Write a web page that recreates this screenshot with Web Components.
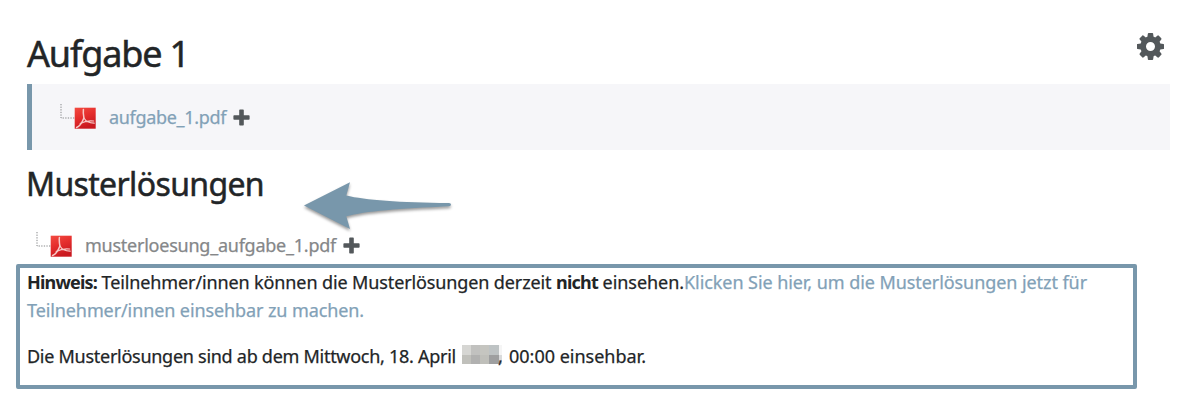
<!DOCTYPE html>
<html lang="de">
<head>
<meta charset="utf-8">
<title>Aufgabe 1</title>
<style>
  body {
    margin: 0;
    background: #fff;
    color: #222527;
    font-family: "Noto Sans", "Open Sans", sans-serif;
    font-size: 18px;
    line-height: 28px;
    -webkit-text-stroke: .25px;
    --accent: #7897ab;
    --link: #82a1b7;
    --icon: #53585b;
  }
</style>
</head>
<body>
<task-page></task-page>

<script>
// One run of text, tracked so that it fills the given width
class FitText extends HTMLElement {
  constructor() {
    super();
    this.attachShadow({ mode: "open" });
    this.shadowRoot.innerHTML = `
      <style>
        :host { display: block; flex: none; }
        span { white-space: pre; }
      </style>
      <span><slot></slot></span>
    `;
    this.run = this.shadowRoot.querySelector("span");
  }

  connectedCallback() {
    const width = Number(this.getAttribute("width"));
    const natural = this.run.getBoundingClientRect().width;
    this.run.style.letterSpacing = (width - natural) / this.textContent.length + "px";
    this.style.width = width + "px";
  }
}

class GearIcon extends HTMLElement {
  constructor() {
    super();
    this.attachShadow({ mode: "open" });
    this.shadowRoot.innerHTML = `
      <style>
        :host { display: block; width: 27px; height: 27px; }
        svg { display: block; fill: var(--icon); }
      </style>
      <svg width="27" height="27" viewBox="0 0 1536 1536">
        <path d="M1024 768q0-106-75-181t-181-75-181 75-75 181 75 181 181 75 181-75 75-181zm512-109v222q0 12-8 23t-20 13l-185 28q-19 54-39 91 35 50 107 138 10 12 10 25t-9 23q-27 37-99 108t-94 71q-12 0-26-9l-138-108q-44 23-91 38-16 136-29 186-7 28-36 28H657q-14 0-24.500-8.500T621 1506l-28-184q-49-16-90-37l-141 107q-10 9-25 9-14 0-25-11-126-114-165-168-7-10-7-23 0-12 8-23 15-21 51-66.500t54-70.500q-27-50-41-99L29 913q-13-2-21-12.500T0 877V655q0-12 8-23t19-13l186-28q14-46 39-92-40-57-107-138-10-12-10-24 0-10 9-23 26-36 98.500-107.500T337 135q13 0 26 10l138 107q44-23 91-38 16-136 29-186 7-28 36-28h222q14 0 24.500 8.500T915 30l28 184q49 16 90 37l142-107q9-9 24-9 13 0 25 10 129 119 165 170 7 8 7 22 0 12-8 23-15 21-51 66.500t-54 70.500q26 50 41 98l183 28q13 2 21 12.500t8 23.500z"/>
      </svg>
    `;
  }
}

class PdfFile extends HTMLElement {
  constructor() {
    super();
    this.attachShadow({ mode: "open" });
    this.shadowRoot.innerHTML = `
      <style>
        :host { display: flex; height: 28px; }
        svg { display: block; flex: none; }
        .name { margin-left: 13px; color: var(--name-color, var(--link)); }
        .plus { margin: 6px 0 0 7px; fill: var(--icon); }
      </style>
      <svg width="36" height="28" viewBox="0 0 36 28">
        <defs>
          <linearGradient id="red" x2=".4" y2="1">
            <stop stop-color="#f34b41"/>
            <stop offset=".5" stop-color="#e52e2d"/>
            <stop offset="1" stop-color="#c91920"/>
          </linearGradient>
        </defs>
        <path d="M1 1v14h14" fill="none" stroke="#858789" stroke-dasharray="1.300 1.300"/>
        <rect x="14.700" y="4.700" width="21" height="21" fill="url(#red)"/>
        <g fill="none" stroke="#f8c9c7" stroke-linecap="round" stroke-linejoin="round">
          <path d="M23.400 6.500c-.4 3 .1 6.300.5 8.500-1.500 3.800-4.300 8.500-7.300 9.500" stroke-width="1.500"/>
          <path d="M23.900 15c1.800 3.300 5.400 5 10.300 5.200M20.200 20.500c3.800-2.100 8-3.200 13.500-2.500" stroke-width="1.200"/>
        </g>
      </svg>
      <span class="name"><slot></slot></span>
      <svg class="plus" width="17" height="17" viewBox="0 0 17 17">
        <path d="M7 .5h3q.8 0 .8.800v4.900h5q.8 0 .8.800v3q0 .8-.8.800h-5v5q0 .8-.8.800H7q-.8 0-.8-.8v-5h-5q-.8 0-.8-.8V7q0-.8.800-.8h5V1.300Q6.200.5 7 .5z"/>
      </svg>
    `;
  }
}

class FilePanel extends HTMLElement {
  constructor() {
    super();
    this.attachShadow({ mode: "open" });
    this.shadowRoot.innerHTML = `
      <style>
        :host {
          display: block;
          box-sizing: border-box;
          height: 66px;
          padding: 19px 0 0 28px;
          border-left: 5px solid var(--accent);
          background: #f6f6f9;
        }
      </style>
      <slot></slot>
    `;
  }
}

class HintFrame extends HTMLElement {
  constructor() {
    super();
    this.attachShadow({ mode: "open" });
    this.shadowRoot.innerHTML = `
      <style>
        :host {
          display: block;
          box-sizing: border-box;
          width: 1121px;
          height: 125px;
          padding-left: 7px;
          border: 4px solid var(--accent);
          border-radius: 2px;
        }
      </style>
      <slot></slot>
    `;
  }
}

// Pixelated block over the year
class MosaicYear extends HTMLElement {
  constructor() {
    super();
    this.attachShadow({ mode: "open" });
    this.shadowRoot.innerHTML = `
      <style>
        :host { display: block; width: 40px; height: 19px; }
        svg { display: block; }
      </style>
      <svg width="40" height="19" shape-rendering="crispEdges">
        <path fill="#d6d6d3" d="M0 0h9v10H0z"/>
        <path fill="#c1c1bf" d="M9 0h9v10H9z"/>
        <path fill="#c5c5c0" d="M18 0h9v10h-9z"/>
        <path fill="#bec3c4" d="M27 0h10v10H27z"/>
        <path fill="#f5f5f5" d="M37 0h3v10h-3z"/>
        <path fill="#c0c0bb" d="M0 10h9v9H0z"/>
        <path fill="#b1b1b0" d="M9 10h9v9H9z"/>
        <path fill="#bfbfba" d="M18 10h9v9h-9z"/>
        <path fill="#9e9fa0" d="M27 10h10v9H27z"/>
        <path fill="#d9dadb" d="M37 10h3v9h-3z"/>
      </svg>
    `;
  }
}

class PointerArrow extends HTMLElement {
  constructor() {
    super();
    this.attachShadow({ mode: "open" });
    this.shadowRoot.innerHTML = `
      <style>
        :host { display: block; width: 160px; height: 60px; }
        svg {
          display: block;
          fill: var(--accent);
          filter: drop-shadow(0 2px 1.500px rgba(0, 0, 0, .4));
        }
      </style>
      <svg width="160" height="60" viewBox="300 178 160 60">
        <path d="M304 205.500 350 182.300 346.300 195.400C365 200 400 202.500 449 203q2 0 2 1.500t-2 1.700C400 208.500 365 211 346.300 216.300L350 229z"/>
      </svg>
    `;
  }
}

class TaskPage extends HTMLElement {
  constructor() {
    super();
    this.attachShadow({ mode: "open" });
    this.shadowRoot.innerHTML = `
      <style>
        :host {
          display: block;
          position: relative;
          box-sizing: border-box;
          height: 402px;
          padding-top: 29px;
          overflow: hidden;
        }

        header {
          display: flex;
          justify-content: space-between;
          height: 55px;
          margin: 0 36px 0 27px;
        }

        h1, h2 { margin: 0; font-weight: 400; line-height: 50px; }
        h1 { font-size: 36px; }
        h2 { font-size: 32px; margin: 9px 0 22px 26px; }
        h1, h2 { -webkit-text-stroke: .5px; }
        gear-icon { margin-top: 4px; }
        file-panel { margin: 0 30px 0 27px; }

        .solution {
          margin: 0 0 5px 36px;
          --name-color: #858789;
        }

        hint-frame { margin-left: 16px; }
        p { margin: 0; }
        p + p { margin-top: 18px; }
        .line { display: flex; height: 28px; }
        .link { color: var(--link); }
        b { font-weight: 700; -webkit-text-stroke: 0; }
        mosaic-year { margin: 3px 0 0 6px; }
        .comma { width: 11px; margin-left: -4px; }

        pointer-arrow {
          position: absolute;
          left: 300px;
          top: 178px;
        }
      </style>

      <header>
        <h1><fit-text width="162">Aufgabe 1</fit-text></h1>
        <gear-icon></gear-icon>
      </header>
      <file-panel>
        <pdf-file><fit-text width="117">aufgabe_1.pdf</fit-text></pdf-file>
      </file-panel>

      <h2><fit-text width="238">Musterlösungen</fit-text></h2>
      <pdf-file class="solution"><fit-text width="251">musterloesung_aufgabe_1.pdf</fit-text></pdf-file>

      <hint-frame>
        <p>
          <span class="line"><b><fit-text width="70">Hinweis:</fit-text></b><fit-text width="459"> Teilnehmer/innen können die Musterlösungen derzeit </fit-text><b><fit-text width="42">nicht</fit-text></b><fit-text width="86"> einsehen.</fit-text><fit-text class="link" width="403">Klicken Sie hier, um die Musterlösungen jetzt für</fit-text></span>
          <span class="line link"><fit-text width="337">Teilnehmer/innen einsehbar zu machen.</fit-text></span>
        </p>
        <p>
          <span class="line"><fit-text width="429">Die Musterlösungen sind ab dem Mittwoch, 18. April</fit-text><mosaic-year></mosaic-year><span class="comma">,</span><fit-text width="137">00:00 einsehbar.</fit-text></span>
        </p>
      </hint-frame>

      <pointer-arrow></pointer-arrow>
    `;
  }
}

customElements.define("gear-icon", GearIcon);
customElements.define("pdf-file", PdfFile);
customElements.define("file-panel", FilePanel);
customElements.define("hint-frame", HintFrame);
customElements.define("mosaic-year", MosaicYear);
customElements.define("pointer-arrow", PointerArrow);
customElements.define("task-page", TaskPage);
customElements.define("fit-text", FitText);
</script>
</body>
</html>
